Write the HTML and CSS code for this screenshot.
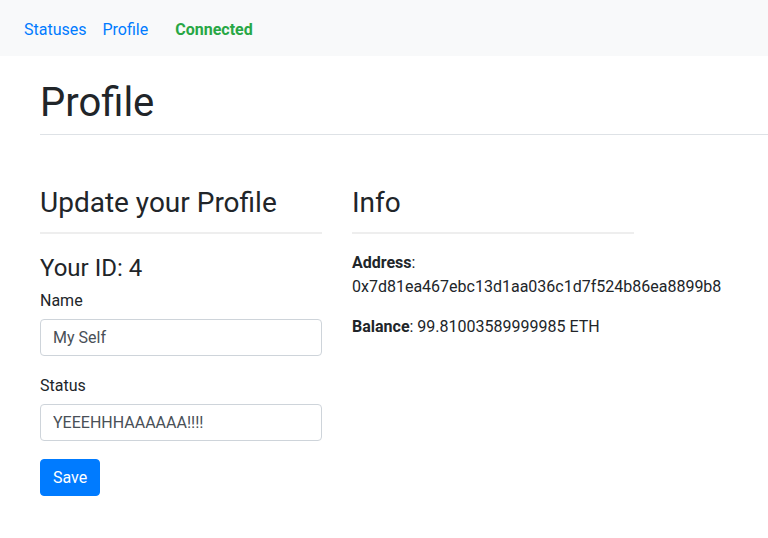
FILE: index.html
```html
<!DOCTYPE html>
<html>
<head>
<meta charset="utf-8">
<link rel="stylesheet" href="styles.css">
</head>
<body>
<nav class="navbar">
  <a class="nav-link" href="#">Statuses</a>
  <a class="nav-link" href="#">Profile</a>
  <span class="connected">Connected</span>
</nav>
<main class="container">
  <h1 class="page-title">Profile</h1>
  <div class="row">
    <section class="col">
      <h2 class="section-title">Update your Profile</h2>
      <h3 class="your-id">Your ID: 4</h3>
      <div class="form-group">
        <label class="label">Name</label>
        <input class="input" type="text" value="My Self">
      </div>
      <div class="form-group">
        <label class="label">Status</label>
        <input class="input" type="text" value="YEEEHHHAAAAAA!!!!">
      </div>
      <button class="btn">Save</button>
    </section>
    <section class="col">
      <h2 class="section-title">Info</h2>
      <p class="info"><strong>Address</strong>:<br>0x7d81ea467ebc13d1aa036c1d7f524b86ea8899b8</p>
      <p class="info"><strong>Balance</strong>: 99.81003589999985 ETH</p>
    </section>
  </div>
</main>
</body>
</html>
```
FILE: styles.css
```css
* { box-sizing: border-box; }
html, body { margin: 0; padding: 0; }
body {
  font-family: Roboto, "Liberation Sans", sans-serif;
  font-size: 16px;
  line-height: 1.5;
  color: #212529;
  background: #fff;
}
.navbar {
  height: 56px;
  background: #f8f9fa;
  display: flex;
  align-items: center;
  padding: 3px 16px 0;
}
.nav-link {
  color: #007bff;
  text-decoration: none;
  padding: 8px;
}
.connected {
  color: #28a745;
  font-weight: bold;
  margin-left: 19px;
}
.container {
  padding-left: 40px;
}
.page-title {
  font-size: 40px;
  font-weight: 400;
  line-height: 48px;
  margin: 23px 0 0;
  padding-bottom: 7px;
  border-bottom: 1px solid #dee2e6;
}
.row {
  display: flex;
  gap: 30px;
  margin-top: 51px;
}
.col { width: 282px; }
.section-title {
  font-size: 28px;
  font-weight: 400;
  line-height: 33.6px;
  margin: 0 0 17px;
  padding-bottom: 12px;
  border-bottom: 2px solid #eeeeee;
}
.your-id {
  font-size: 24px;
  font-weight: 400;
  line-height: 28.8px;
  padding-top: 3px;
  margin: 0 0 7px;
}
.form-group { margin-bottom: 18px; }
.label { display: inline-block; margin-bottom: 6px; }
.input {
  display: block;
  width: 100%;
  height: 37px;
  padding: 6px 12px;
  font: inherit;
  color: #495057;
  border: 1px solid #ced4da;
  border-radius: 4px;
  background: #fff;
}
.btn {
  font: inherit;
  color: #fff;
  background: #007bff;
  border: 1px solid #007bff;
  border-radius: 4px;
  padding: 6px 12px;
  height: 37px;
}
.info { margin: 0 0 16px; }
strong { font-weight: bold; }
```
